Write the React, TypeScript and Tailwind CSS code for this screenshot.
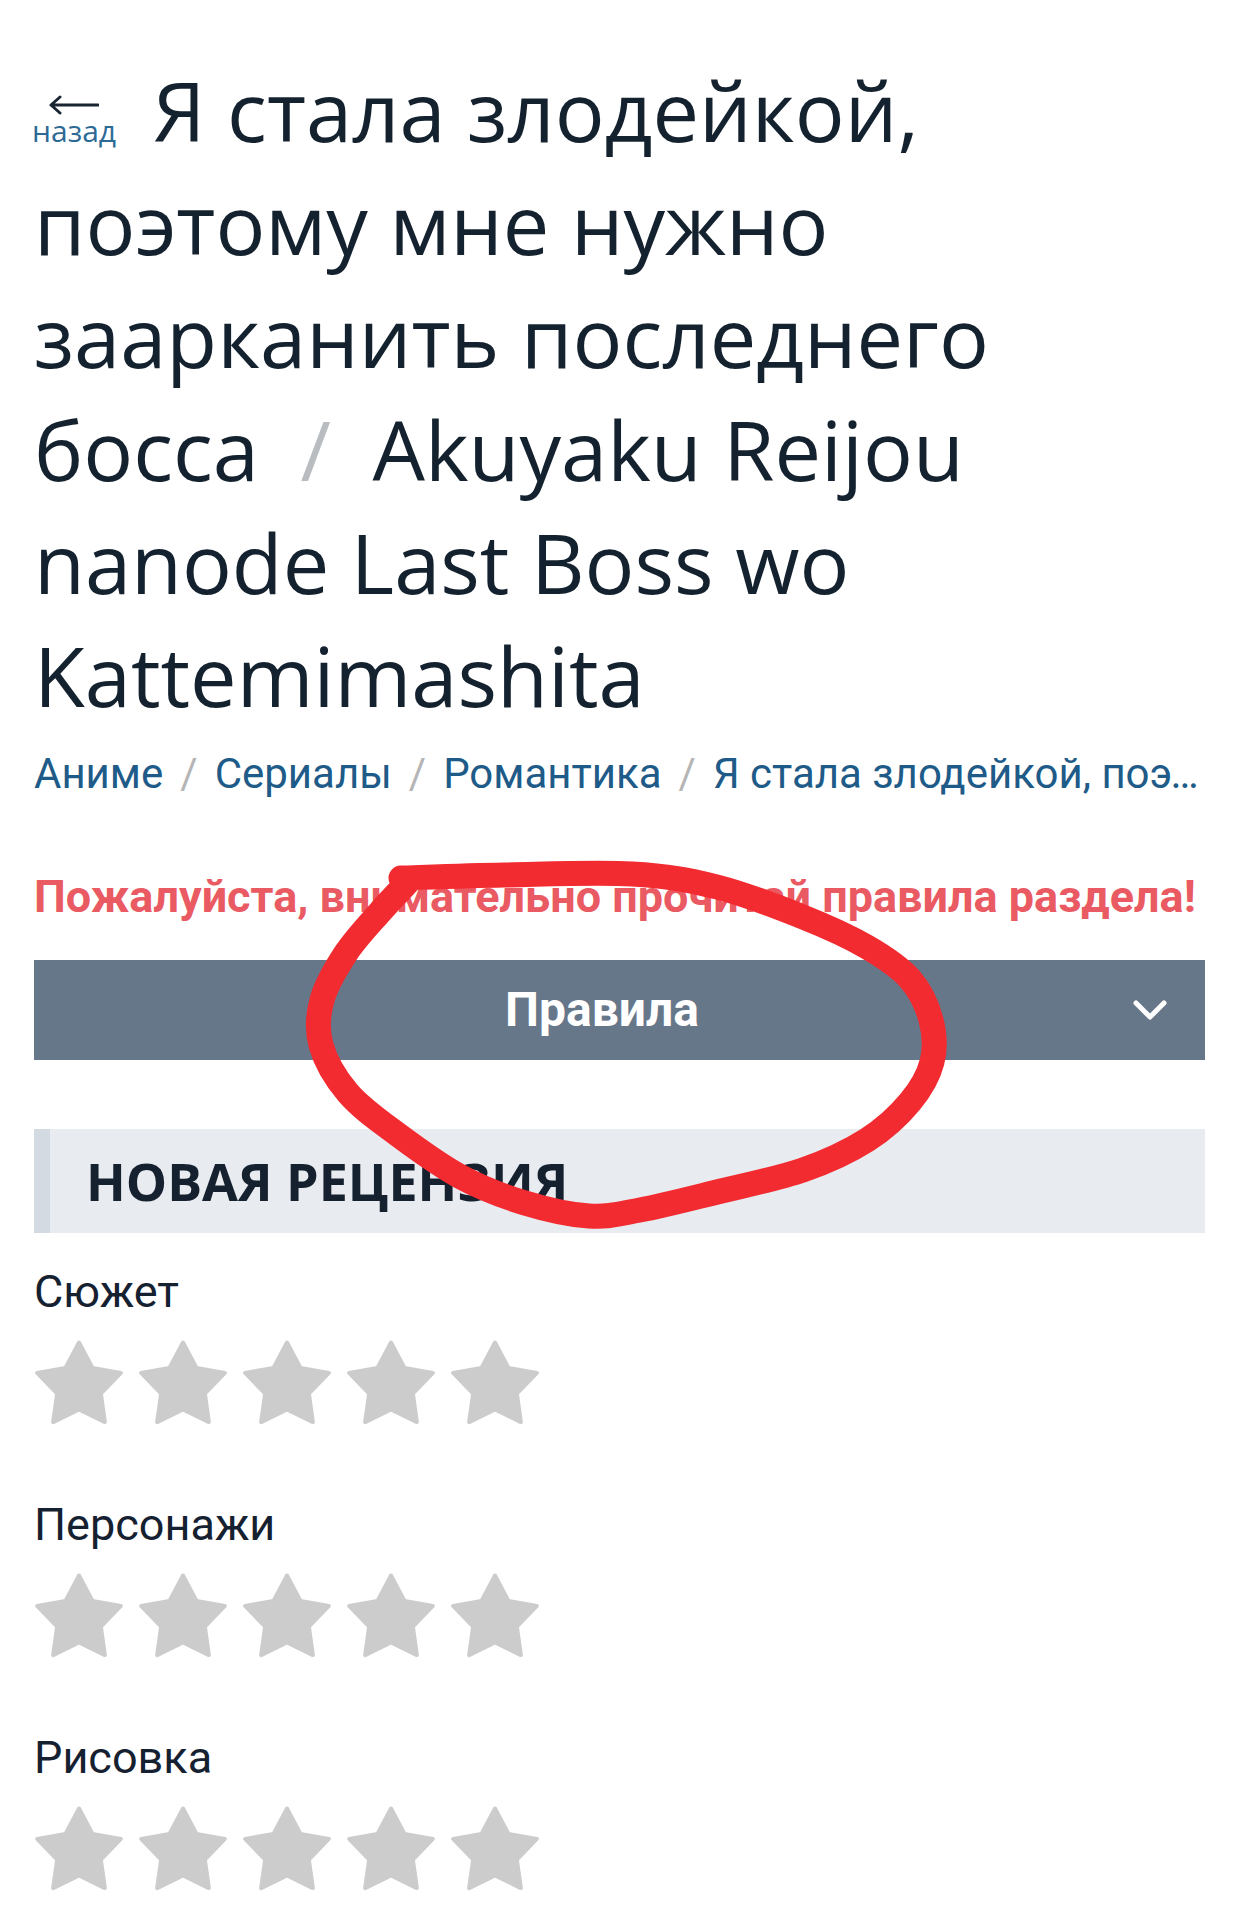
import React from "react";

const crumbs = ["Аниме", "Сериалы", "Романтика"];
const ratings = ["Сюжет", "Персонажи", "Рисовка"];

// star points for a 90x86 box
const starPoints = (() => {
  const cx = 45;
  const cy = 47.5;
  const R = 44;
  const r = 23;
  const pts: string[] = [];
  for (let i = 0; i < 10; i++) {
    const rad = i % 2 === 0 ? R : r;
    const a = (-90 + i * 36) * (Math.PI / 180);
    pts.push(`${(cx + rad * Math.cos(a)).toFixed(2)},${(cy + rad * Math.sin(a)).toFixed(2)}`);
  }
  return pts.join(" ");
})();

// hand drawn marker circle, smoothed through points
const circlePts: [number, number][] = [
  [401, 878], [504, 875], [632, 874], [717, 887], [803, 917], [867, 947],
  [910, 979], [931, 1020], [932, 1062], [910, 1102], [867, 1140], [803, 1170],
  [717, 1192], [640, 1210], [589, 1216], [525, 1203], [461, 1177], [397, 1134],
  [348, 1093], [321, 1045], [322, 1000], [346, 953], [380, 912], [408, 882],
];

const smoothPath = (pts: [number, number][]) => {
  let d = `M${pts[0][0]} ${pts[0][1]}`;
  for (let i = 0; i < pts.length - 1; i++) {
    const p0 = pts[i - 1] || pts[i];
    const p1 = pts[i];
    const p2 = pts[i + 1];
    const p3 = pts[i + 2] || p2;
    const c1x = p1[0] + (p2[0] - p0[0]) / 6;
    const c1y = p1[1] + (p2[1] - p0[1]) / 6;
    const c2x = p2[0] - (p3[0] - p1[0]) / 6;
    const c2y = p2[1] - (p3[1] - p1[1]) / 6;
    d += ` C${c1x} ${c1y} ${c2x} ${c2y} ${p2[0]} ${p2[1]}`;
  }
  return d;
};

const Star = () => (
  <svg width="90" height="86" viewBox="0 0 90 86" className="block">
    <polygon points={starPoints} fill="#cccccc" stroke="#cccccc" strokeWidth="4" strokeLinejoin="round" />
  </svg>
);

export default function App() {
  return (
    <div className="relative min-h-[1920px] bg-white px-[34px] pt-[53px] overflow-hidden">
      <h1 className="text-[83px] leading-[113px] font-normal text-[#14212e] [font-family:'Open_Sans',sans-serif]">
        <span className="inline-block -ml-[2px] mr-[37px] text-center">
          <svg width="50" height="22" viewBox="0 0 50 22" className="mx-auto block">
            <path d="M2 11 H49 M11 3 L2 11 L11 19" fill="none" stroke="#1a2533" strokeWidth="3" strokeLinecap="round" strokeLinejoin="round" />
          </svg>
          <span className="block text-[30px] leading-[30px] text-[#2d6a96]">назад</span>
        </span>
        Я стала злодейкой, поэтому мне нужно заарканить последнего босса{" "}
        <span className="px-[20px] text-[#b9bdc1]">/</span> Akuyaku Reijou nanode Last Boss wo Kattemimashita
      </h1>

      <nav className="mt-[18px] flex items-center whitespace-nowrap text-[42px] leading-[50px] text-[#1e5b88] [font-family:Roboto,sans-serif]">
        {crumbs.map((c) => (
          <React.Fragment key={c}>
            <span className="flex-none">{c}</span>
            <span className="flex-none px-[17px] text-[#b5b5b5]">/</span>
          </React.Fragment>
        ))}
        <span className="min-w-0 truncate">
          Я стала злодейкой, поэтому мне нужно заарканить последнего босса
        </span>
      </nav>

      <p className="mt-[73px] text-[45px] leading-[50px] font-bold text-[#e95a62] whitespace-nowrap [font-family:Roboto,sans-serif]">
        Пожалуйста, внимательно прочитай правила раздела!
      </p>

      <button className="mt-[38px] flex h-[100px] w-full items-center bg-[#67778a] pl-[37px] pr-[38px] text-white [font-family:Roboto,sans-serif]">
        <span className="flex-1 text-center text-[48px] font-bold leading-[50px]">Правила</span>
        <svg width="34" height="20" viewBox="0 0 34 20" className="block">
          <path d="M3 3 L17 17 L31 3" fill="none" stroke="#ffffff" strokeWidth="5" strokeLinecap="round" strokeLinejoin="round" />
        </svg>
      </button>

      <div className="mt-[69px] flex h-[104px] items-center border-l-[16px] border-[#d4dae2] bg-[#e8ebf0] pl-[36px]">
        <h2 className="text-[52px] leading-[60px] font-bold uppercase text-[#15212e] [font-family:'Open_Sans',sans-serif]">
          Новая рецензия
        </h2>
      </div>

      <div className="mt-[34px] flex flex-col gap-[75px] [font-family:Roboto,sans-serif]">
        {ratings.map((r) => (
          <div key={r}>
            <div className="text-[45px] leading-[50px] text-[#152130]">{r}</div>
            <div className="mt-[22px] flex gap-[14px]">
              {[0, 1, 2, 3, 4].map((i) => (
                <Star key={i} />
              ))}
            </div>
          </div>
        ))}
      </div>

      <svg className="pointer-events-none absolute left-0 top-0" width="1239" height="1300" viewBox="0 0 1239 1300">
        <path d={smoothPath(circlePts)} fill="none" stroke="#f22b31" strokeWidth="25" strokeLinecap="round" strokeLinejoin="round" />
      </svg>
    </div>
  );
}
